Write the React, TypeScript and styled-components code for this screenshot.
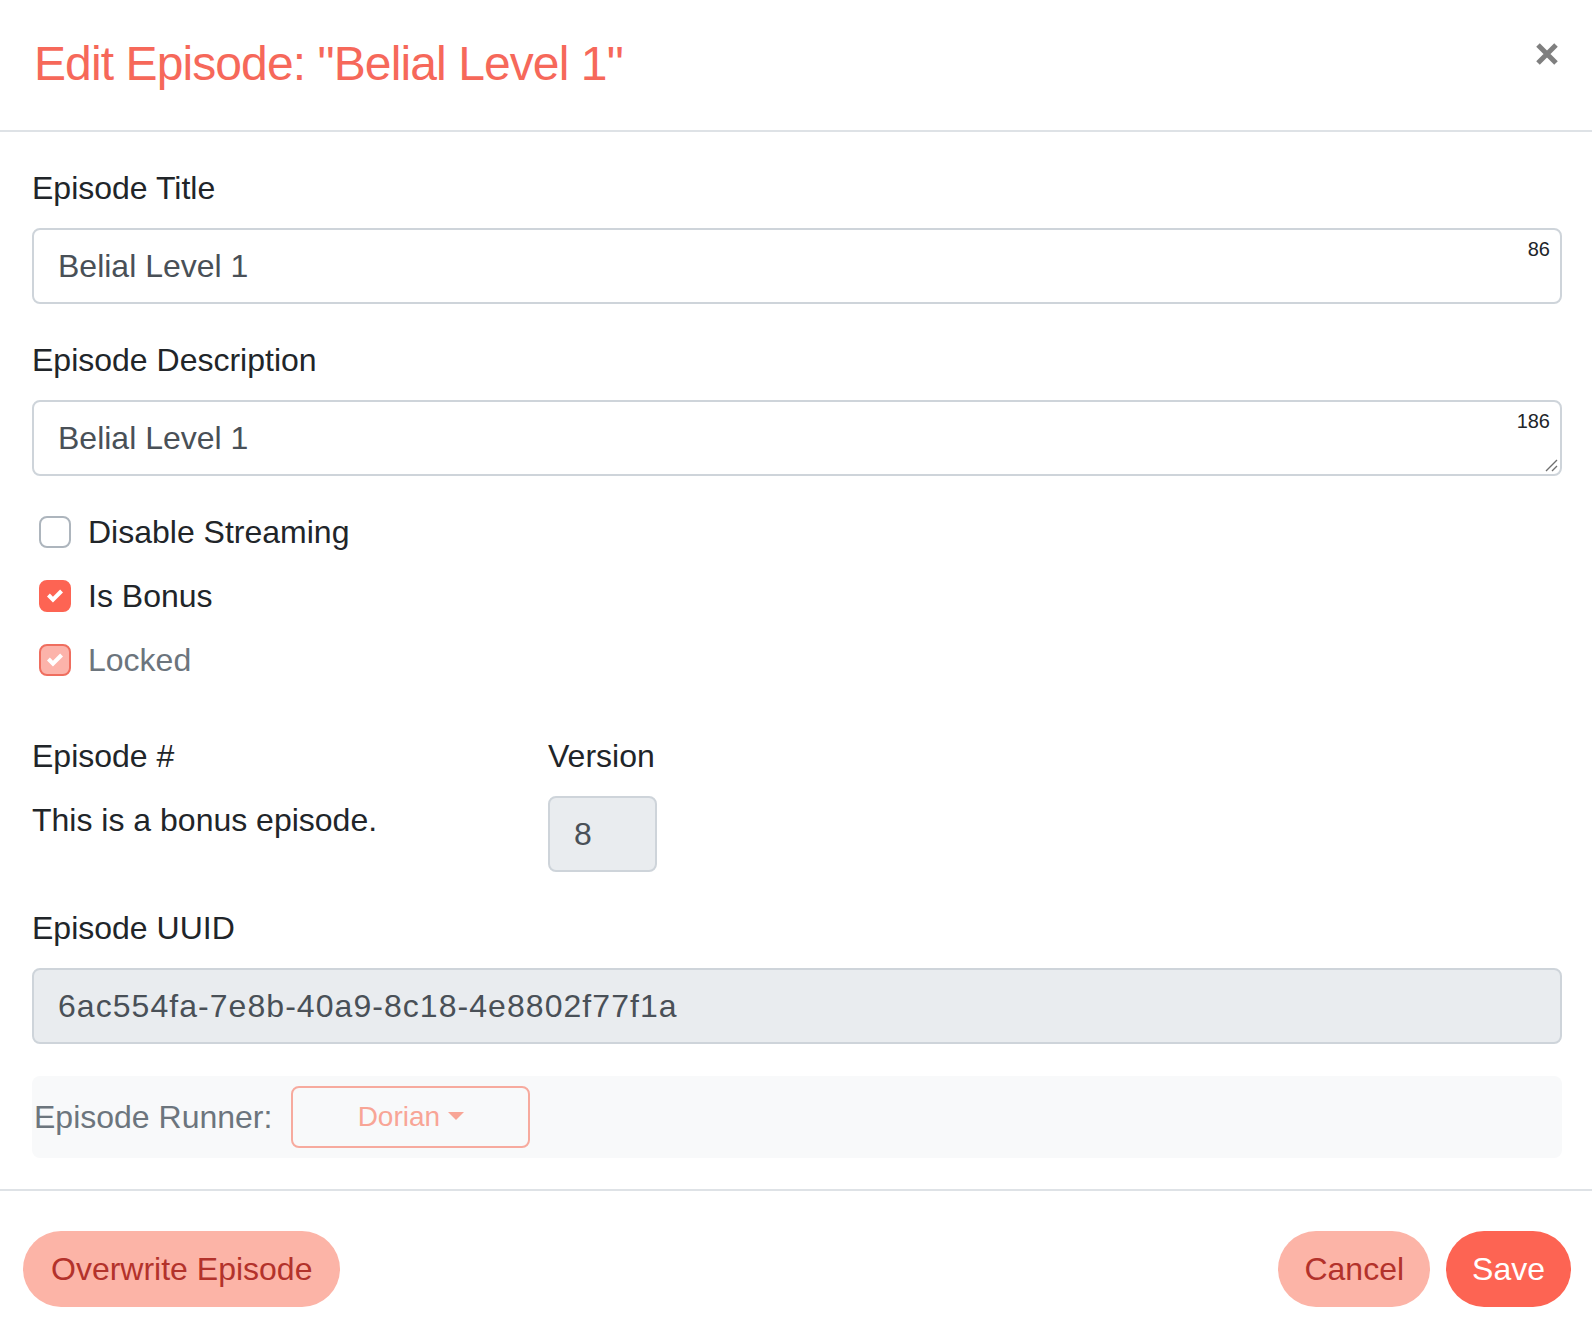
import React from "react";
import styled, { createGlobalStyle } from "styled-components";

const GlobalStyle = createGlobalStyle`
  html, body {
    margin: 0;
    padding: 0;
    background: #fff;
  }
  body {
    font-family: "Liberation Sans", Arial, sans-serif;
    color: #212529;
  }
  * {
    box-sizing: border-box;
  }
`;

const Modal = styled.div`
  width: 1592px;
  min-height: 1344px;
  background: #fff;
  display: flex;
  flex-direction: column;
`;

const Header = styled.header`
  display: flex;
  justify-content: space-between;
  align-items: flex-start;
  height: 132px;
  padding: 35px 33px 0 34px;
  border-bottom: 2px solid #dee2e6;
`;

const Title = styled.h4`
  margin: 0;
  font-size: 48px;
  line-height: 57.6px;
  font-weight: 400;
  letter-spacing: -0.9px;
  color: #f6685a;
`;

const CloseButton = styled.button`
  margin-top: 7px;
  width: 24px;
  height: 24px;
  padding: 0;
  border: none;
  background: none;
  cursor: pointer;
  display: block;
`;

const Body = styled.div`
  padding: 32px 30px 31px 32px;
`;

const FormGroup = styled.div<{ $mb?: number }>`
  margin-bottom: ${(p) => (p.$mb ?? 32)}px;
`;

const Label = styled.label`
  display: block;
  font-size: 32px;
  line-height: 48px;
  margin-bottom: 16px;
  color: #212529;
`;

const Field = styled.div`
  position: relative;
`;

const Input = styled.input<{ $width?: number; $spaced?: boolean }>`
  display: block;
  width: ${(p) => (p.$width ? `${p.$width}px` : "100%")};
  height: 76px;
  padding: 0 24px;
  border: 2px solid #ced4da;
  border-radius: 8px;
  font-family: inherit;
  font-size: 32px;
  letter-spacing: ${(p) => (p.$spaced ? "1.05px" : "normal")};
  color: #495057;
  background: #fff;
  outline: none;

  &:disabled {
    background: #e9ecef;
    color: #495057;
    -webkit-text-fill-color: #495057;
    opacity: 1;
  }
`;

const TextArea = styled.textarea`
  display: block;
  width: 100%;
  height: 76px;
  padding: 12px 24px;
  border: 2px solid #ced4da;
  border-radius: 8px;
  font-family: inherit;
  font-size: 32px;
  line-height: 48px;
  color: #495057;
  background: #fff;
  resize: none;
  overflow: hidden;
  outline: none;
`;

const Counter = styled.span`
  position: absolute;
  top: 11px;
  right: 12px;
  font-size: 20px;
  line-height: 20px;
  color: #212529;
`;

const Grip = styled.svg`
  position: absolute;
  right: 4px;
  bottom: 4px;
`;

const CheckList = styled.div`
  display: flex;
  flex-direction: column;
  gap: 16px;
  margin-bottom: 48px;
`;

const CheckRow = styled.label`
  display: flex;
  align-items: center;
  height: 48px;
`;

const Box = styled.span<{ $checked?: boolean; $disabled?: boolean }>`
  width: 32px;
  height: 32px;
  margin-left: 7px;
  border-radius: 8px;
  display: flex;
  align-items: center;
  justify-content: center;
  border: 2px solid
    ${(p) => (!p.$checked ? "#adb5bd" : p.$disabled ? "#ef6e5f" : "#fd6453")};
  background: ${(p) =>
    !p.$checked ? "#fff" : p.$disabled ? "#fcb3aa" : "#fd6453"};
`;

const CheckText = styled.span<{ $muted?: boolean }>`
  margin-left: 17px;
  font-size: 32px;
  line-height: 48px;
  color: ${(p) => (p.$muted ? "#6c757d" : "#212529")};
`;

const SplitRow = styled.div`
  display: grid;
  grid-template-columns: 516px 109px;
  margin-bottom: 32px;
`;

const StaticText = styled.p`
  margin: 0;
  font-size: 32px;
  line-height: 48px;
`;

const RunnerBar = styled.div`
  display: flex;
  align-items: center;
  height: 82px;
  padding: 0 2px;
  border-radius: 8px;
  background: #f8f9fa;
`;

const RunnerLabel = styled.span`
  font-size: 32px;
  line-height: 48px;
  color: #6c757d;
`;

const DropButton = styled.button`
  margin-left: 19px;
  width: 239px;
  height: 62px;
  border: 2px solid #f7aa9e;
  border-radius: 8px;
  background: transparent;
  color: #f8a596;
  font-family: inherit;
  font-size: 28px;
  display: flex;
  align-items: center;
  justify-content: center;
  gap: 8px;
`;

const Caret = styled.span`
  width: 0;
  height: 0;
  border-top: 8px solid currentColor;
  border-left: 8px solid transparent;
  border-right: 8px solid transparent;
  margin-top: -2px;
`;

const Footer = styled.footer`
  display: flex;
  align-items: center;
  padding: 40px 21px 36px 23px;
  border-top: 2px solid #dee2e6;
`;

const Pill = styled.button<{ $solid?: boolean; $first?: boolean }>`
  height: 76px;
  padding: 0 ${(p) => (p.$first ? 28 : 26)}px;
  border: none;
  border-radius: 38px;
  font-family: inherit;
  font-size: 32px;
  line-height: 48px;
  background: ${(p) => (p.$solid ? "#fd6453" : "#fcb4a7")};
  color: ${(p) => (p.$solid ? "#fff" : "#b3322b")};
  margin-left: ${(p) => (p.$first ? 0 : 16)}px;
  cursor: pointer;
`;

const Spacer = styled.div`
  flex: 1;
`;

const Tick = () => (
  <svg width="16" height="16" viewBox="0 0 8 8">
    <path fill="#fff" d="M6.564.75l-3.59 3.612-1.538-1.55L0 4.26 2.974 7.25 8 2.193z" />
  </svg>
);

const CloseIcon = () => (
  <svg width="24" height="24" viewBox="0 0 24 24">
    <path
      d="M3 3 L21 21 M21 3 L3 21"
      stroke="#7f7f7f"
      strokeWidth="5"
      strokeLinecap="butt"
    />
  </svg>
);

const ResizeGrip = () => (
  <Grip width="14" height="14" viewBox="0 0 14 14">
    <path d="M13 2 L2 13 M13 8 L8 13" stroke="#6f6f6f" strokeWidth="1.4" fill="none" />
  </Grip>
);

const checks = [
  { label: "Disable Streaming", checked: false, disabled: false },
  { label: "Is Bonus", checked: true, disabled: false },
  { label: "Locked", checked: true, disabled: true },
];

export default function App() {
  return (
    <Modal>
      <GlobalStyle />
      <Header>
        <Title>Edit Episode: "Belial Level 1"</Title>
        <CloseButton aria-label="Close">
          <CloseIcon />
        </CloseButton>
      </Header>

      <Body>
        <FormGroup>
          <Label>Episode Title</Label>
          <Field>
            <Input defaultValue="Belial Level 1" />
            <Counter>86</Counter>
          </Field>
        </FormGroup>

        <FormGroup>
          <Label>Episode Description</Label>
          <Field>
            <TextArea defaultValue="Belial Level 1" rows={1} />
            <Counter>186</Counter>
            <ResizeGrip />
          </Field>
        </FormGroup>

        <CheckList>
          {checks.map((c) => (
            <CheckRow key={c.label}>
              <Box $checked={c.checked} $disabled={c.disabled}>
                {c.checked && <Tick />}
              </Box>
              <CheckText $muted={c.disabled}>{c.label}</CheckText>
            </CheckRow>
          ))}
        </CheckList>

        <SplitRow>
          <div>
            <Label>Episode #</Label>
            <StaticText>This is a bonus episode.</StaticText>
          </div>
          <div>
            <Label>Version</Label>
            <Input $width={109} defaultValue="8" disabled />
          </div>
        </SplitRow>

        <FormGroup>
          <Label>Episode UUID</Label>
          <Input $spaced defaultValue="6ac554fa-7e8b-40a9-8c18-4e8802f77f1a" disabled />
        </FormGroup>

        <RunnerBar>
          <RunnerLabel>Episode Runner:</RunnerLabel>
          <DropButton>
            Dorian
            <Caret />
          </DropButton>
        </RunnerBar>
      </Body>

      <Footer>
        <Pill $first>Overwrite Episode</Pill>
        <Spacer />
        <Pill>Cancel</Pill>
        <Pill $solid>Save</Pill>
      </Footer>
    </Modal>
  );
}
